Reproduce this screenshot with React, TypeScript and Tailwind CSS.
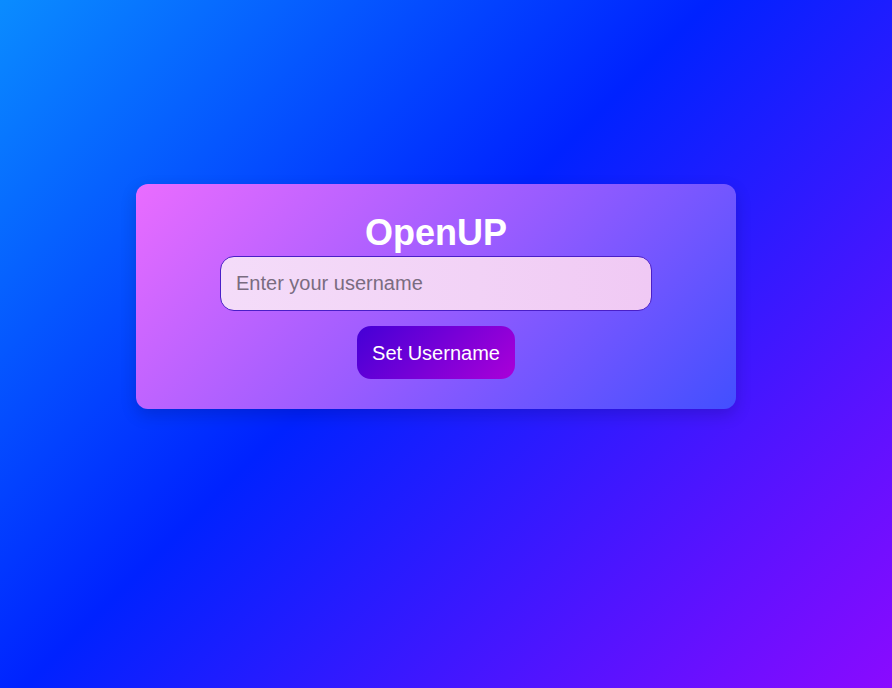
import React from "react";

export default function App() {
  return (
    <div
      className="w-[892px] h-[688px] overflow-hidden flex justify-start items-start pl-[136px] pt-[184px] bg-[linear-gradient(135deg,#0a8cff_0%,#0022ff_45%,#8a0aff_100%)]"
      style={{ fontFamily: '"Liberation Sans", Arial, sans-serif' }}
    >
      <div className="w-[600px] rounded-[12px] px-[30px] pt-[28px] pb-[30px] flex flex-col items-center bg-[linear-gradient(135deg,#ea6cff_0%,#9a5cff_50%,#424fff_100%)] shadow-[0_6px_16px_rgba(0,0,40,0.18)]">
        <h1 className="text-[36px] leading-[41px] font-bold text-white m-0">OpenUP</h1>
        <input
          type="text"
          placeholder="Enter your username"
          className="mt-[3px] w-[432px] h-[55px] px-[15px] rounded-[14px] border border-[#4a1fc8] bg-[linear-gradient(90deg,#f4dcf9_0%,#f2d2f6_60%,#f0c9f4_100%)] text-[20px] text-[#333] placeholder:text-[#7a6c80] outline-none"
        />
        <button className="mt-[15px] px-[15px] h-[53px] rounded-[14px] text-white text-[20px] bg-[linear-gradient(135deg,#4400d6_0%,#aa00d8_100%)]">
          Set Username
        </button>
      </div>
    </div>
  );
}
